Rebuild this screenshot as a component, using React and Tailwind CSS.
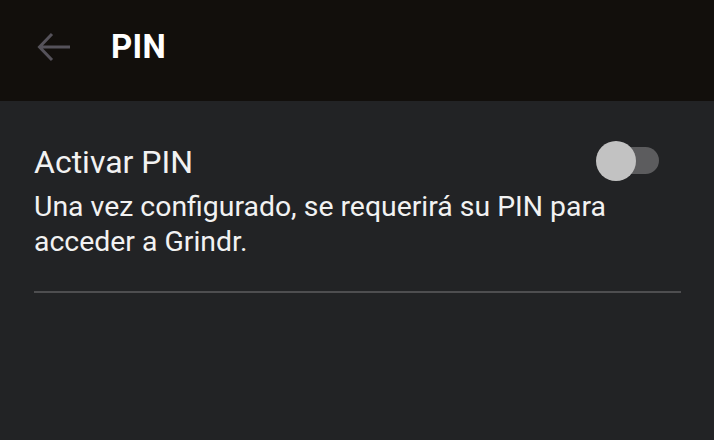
import React, { useState } from 'react';

const App = () => {
  const [enabled, setEnabled] = useState(false);

  return (
    <div className="w-[714px] h-[440px] bg-[#222325] font-['Roboto',sans-serif] overflow-hidden">
      {/* Toolbar */}
      <div className="h-[101px] bg-[#120f0c] flex items-center pl-[37px] pb-[8px]">
        <svg width="34" height="30" viewBox="0 0 34 30" className="shrink-0">
          <path d="M33 15H3M15 2L2.5 15L15 28" fill="none" stroke="#55525a" strokeWidth="3" />
        </svg>
        <h1 className="ml-[40px] text-white text-[33px] leading-[40px] font-bold tracking-[0.3px]">PIN</h1>
      </div>

      {/* Setting row */}
      <div className="px-[34px] pt-[41px] text-[#f2f2f2]">
        <div className="flex items-start">
          <div className="flex-1 text-[32px] leading-[40px]">Activar PIN</div>
          <button
            onClick={() => setEnabled(!enabled)}
            className="relative -mt-[1px] mr-[21px] w-[63px] h-[40px] shrink-0"
          >
            <span className="absolute left-[10px] right-0 top-[6px] h-[27px] rounded-full bg-[#5c5c5e]" />
            <span className="absolute left-0 top-0 w-[40px] h-[40px] rounded-full bg-[#c2c2c2]" />
          </button>
        </div>
        <div className="mt-[7px] text-[28.4px] leading-[35px]">
          Una vez configurado, se requerirá su PIN para acceder a Grindr.
        </div>
        <div className="mt-[32px] h-[2px] bg-[#4e4e50] mr-[-1px]" />
      </div>
    </div>
  );
};

export default App;
